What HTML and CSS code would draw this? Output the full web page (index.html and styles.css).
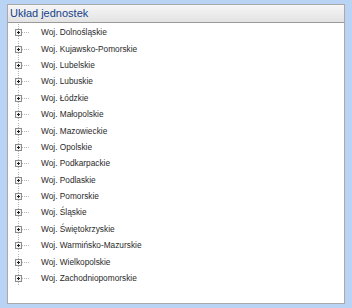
FILE: index.html
```html
<!DOCTYPE html>
<html lang="pl">

<head>
    <meta charset="UTF-8">
    <title>Układ jednostek</title>
    <link rel="stylesheet" href="styles.css">
</head>

<body>
    <!-- Icon sprites -->
    <svg class="sprites" xmlns="http://www.w3.org/2000/svg">
        <symbol id="elbow" viewBox="0 0 22 16">
            <path d="M7.5 0V5M7.5 12V16M11 8.5H19" stroke="#b4b4b4" stroke-dasharray="1 1" fill="none"/>
            <rect x="4.5" y="5.5" width="6" height="6" fill="#f4f4f4" stroke="#8c8c8c"/>
            <path d="M6 8.5H9M7.5 7V10" stroke="#222" fill="none"/>
        </symbol>
    </svg>

    <div class="panel">
        <div class="panel-header">Układ jednostek</div>
        <ul class="tree">
            <li class="node"><svg class="elbow"><use href="#elbow"/></svg><span>Woj. Dolnośląskie</span></li>
            <li class="node"><svg class="elbow"><use href="#elbow"/></svg><span>Woj. Kujawsko-Pomorskie</span></li>
            <li class="node"><svg class="elbow"><use href="#elbow"/></svg><span>Woj. Lubelskie</span></li>
            <li class="node"><svg class="elbow"><use href="#elbow"/></svg><span>Woj. Lubuskie</span></li>
            <li class="node"><svg class="elbow"><use href="#elbow"/></svg><span>Woj. Łódzkie</span></li>
            <li class="node"><svg class="elbow"><use href="#elbow"/></svg><span>Woj. Małopolskie</span></li>
            <li class="node"><svg class="elbow"><use href="#elbow"/></svg><span>Woj. Mazowieckie</span></li>
            <li class="node"><svg class="elbow"><use href="#elbow"/></svg><span>Woj. Opolskie</span></li>
            <li class="node"><svg class="elbow"><use href="#elbow"/></svg><span>Woj. Podkarpackie</span></li>
            <li class="node"><svg class="elbow"><use href="#elbow"/></svg><span>Woj. Podlaskie</span></li>
            <li class="node"><svg class="elbow"><use href="#elbow"/></svg><span>Woj. Pomorskie</span></li>
            <li class="node"><svg class="elbow"><use href="#elbow"/></svg><span>Woj. Śląskie</span></li>
            <li class="node"><svg class="elbow"><use href="#elbow"/></svg><span>Woj. Świętokrzyskie</span></li>
            <li class="node"><svg class="elbow"><use href="#elbow"/></svg><span>Woj. Warmińsko-Mazurskie</span></li>
            <li class="node"><svg class="elbow"><use href="#elbow"/></svg><span>Woj. Wielkopolskie</span></li>
            <li class="node"><svg class="elbow"><use href="#elbow"/></svg><span>Woj. Zachodniopomorskie</span></li>
        </ul>
    </div>
</body>

</html>
```

FILE: styles.css
```css
/* Global */
body {
    margin: 0;
    padding: 4px 7px 4px 7px;
    background-color: #b9d3f4;
    font-family: "Liberation Sans", Arial, sans-serif;
}

.sprites {
    display: none;
}

/* Panel */
.panel {
    height: 300px;
    box-sizing: border-box;
    background: #fff;
    border: 1px solid #a9a9a9;
}

.panel-header {
    height: 17px;
    line-height: 17px;
    padding-left: 2px;
    font-size: 11px;
    color: #15428b;
    background: linear-gradient(#f6f6f6, #e3e3e3);
    border-bottom: 1px solid #9a9a9a;
}

/* Tree */
.tree {
    list-style: none;
    margin: 0;
    padding: 1px 0 0 3px;
}

.node {
    display: flex;
    align-items: center;
    height: 16.4px;
    font-size: 8.3px;
    color: #2a2a2a;
}

.elbow {
    width: 22px;
    height: 16px;
    flex: none;
}

.node span {
    margin-left: 8px;
}
```
